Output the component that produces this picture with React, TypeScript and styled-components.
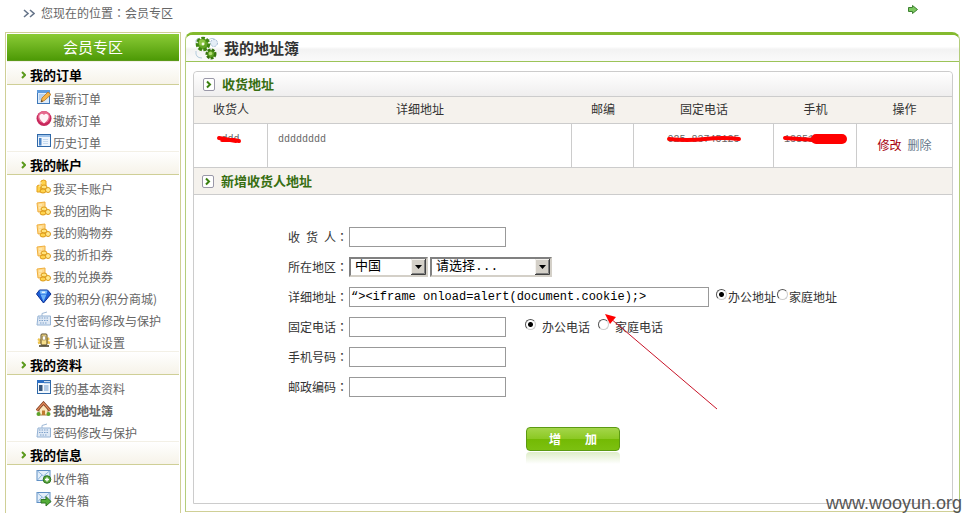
import React from "react";
import styled, { createGlobalStyle } from "styled-components";

const GlobalStyle = createGlobalStyle`
  *, *::before, *::after { box-sizing: border-box; }
  body {
    margin: 0;
    background: #fff;
    color: #333;
    font-family: "Noto Sans CJK SC", sans-serif;
    font-size: 12px;
    line-height: 16px;
  }
  a { color: inherit; text-decoration: none; }
  ul { list-style: none; margin: 0; padding: 0; }
`;

const Page = styled.div`
  position: relative;
  display: flex;
  flex-direction: column;
  min-height: 100vh;
`;

const TopBar = styled.nav`
  display: flex;
  align-items: flex-start;
  gap: 6px;
  height: 32px;
  padding: 5px 44px 0 23px;
  color: #666;

  svg:last-child { margin-left: auto; }
  svg:first-child { margin-top: 4px; }
`;

const Colon = styled.span`
  font-family: "Noto Sans CJK TC", sans-serif;
`;

const Columns = styled.div`
  flex: 1;
  display: flex;
  gap: 4px;
  padding: 0 2px 0 5px;
`;

const Sidebar = styled.aside`
  flex: none;
  width: 176px;
  padding: 1px;
  border: 1px solid #cfcf96;
  border-bottom: 0;
`;

const SidebarTitle = styled.h2`
  margin: 0;
  height: 27px;
  border-bottom: 1px solid #5b9a1a;
  background: linear-gradient(#8bcb36, #4d9a06);
  color: #fff;
  font-size: 15px;
  font-weight: 400;
  line-height: 25px;
  text-align: center;
`;

const GroupTitle = styled.h3`
  display: flex;
  align-items: center;
  gap: 4px;
  height: 24px;
  margin: 0;
  padding: 4px 0 0 14px;
  border-top: 1px solid #f3f0e6;
  border-bottom: 1px solid #cfcf96;
  background: linear-gradient(#fff, #f6f3e9);
  color: #000;
  font-size: 13px;
  font-weight: 700;
`;

const MenuLink = styled.a<{ $current?: boolean }>`
  display: flex;
  align-items: center;
  gap: 1px;
  height: 22px;
  padding: 6px 0 0 29px;
  color: #666;
  font-weight: ${(p) => (p.$current ? 700 : 400)};

  svg { margin-bottom: 5px; }
`;

const Main = styled.main`
  flex: 1;
  min-width: 0;
  display: flex;
  flex-direction: column;
  margin-bottom: 1px;
  border: 1px solid #b4cd7c;
  border-top: 3px solid #84ba2f;
  border-bottom-color: #cfcf96;
  border-radius: 8px 8px 0 0;
`;

const PageTitle = styled.h1`
  display: flex;
  align-items: center;
  gap: 4px;
  height: 27px;
  margin: 0 0 9px;
  padding-left: 9px;
  border-bottom: 1px solid #9cc458;
  background: linear-gradient(#fff 45%, #f3f3f3 55%, #fafafa);
  font-size: 15px;
  font-weight: 700;
  border-radius: 6px 6px 0 0;
`;

const Panel = styled.section`
  flex: 1;
  margin: 0 6px 7px 7px;
  border: 1px solid #ccc;
  border-radius: 4px 4px 0 0;
`;

const PanelTitle = styled.h2<{ $flat?: boolean }>`
  display: flex;
  align-items: center;
  gap: 7px;
  height: ${(p) => (p.$flat ? 27 : 25)}px;
  margin: 0;
  padding-left: ${(p) => (p.$flat ? 8 : 9)}px;
  border-bottom: 1px solid #ccc;
  background: ${(p) => (p.$flat ? "#f5f2ed" : "linear-gradient(#fff, #efeeee)")};
  color: #376e12;
  font-size: 13px;
  font-weight: 700;
  border-radius: ${(p) => (p.$flat ? 0 : "4px 4px 0 0")};
`;

const AddressTable = styled.table`
  width: 100%;
  table-layout: fixed;
  border-collapse: separate;
  border-spacing: 0;
`;

const Col = styled.col<{ $w?: number }>`
  width: ${(p) => (p.$w ? `${p.$w}px` : "auto")};
`;

const HeadCell = styled.th`
  height: 27px;
  padding: 0 0 2px;
  border-bottom: 1px solid #ccc;
  background: #f5f2ed;
  font-weight: 400;
`;

const Cell = styled.td<{ $center?: boolean; $middle?: boolean }>`
  height: 44px;
  padding: ${(p) => (p.$middle ? "0 0 2px" : p.$center ? "8px 0 0" : "8px 0 0 10px")};
  border-bottom: 1px solid #ccc;
  color: #666;
  font-family: "Liberation Mono", "Noto Sans CJK SC", monospace;
  font-size: ${(p) => (p.$middle ? 12 : 10)}px;
  vertical-align: ${(p) => (p.$middle ? "middle" : "top")};
  text-align: ${(p) => (p.$center ? "center" : "left")};

  &:not(:last-child) { border-right: 1px solid #ccc; }
`;

const Masked = styled.span`
  position: relative;
  display: inline-block;

  svg { position: absolute; left: -4px; top: 0; overflow: visible; }
`;

const Actions = styled.div`
  display: flex;
  justify-content: center;
  gap: 6px;
  font-family: "Noto Sans CJK SC", sans-serif;
`;

const EditLink = styled.a`
  color: #a8000c;
`;

const DeleteLink = styled.a`
  color: #66788a;
`;

const Form = styled.form`
  position: relative;
  display: flex;
  flex-direction: column;
  gap: 10px;
  padding: 32px 0 0 94px;
`;

const Row = styled.div`
  display: flex;
  align-items: center;
  height: 20px;
`;

const Label = styled.label`
  flex: none;
  width: 61px;
  white-space: nowrap;
`;

const TextBox = styled.input<{ $wide?: boolean }>`
  width: ${(p) => (p.$wide ? 360 : 157)}px;
  height: 20px;
  padding: 0 1px;
  border: 1px solid #999;
  background: #fff;
  color: #000;
  font-family: "Liberation Mono", monospace;
  font-size: 12px;
  outline: none;
`;

const SelectBox = styled.span<{ $w: number }>`
  position: relative;
  width: ${(p) => p.$w}px;
  height: 20px;
  margin-right: 2px;

  svg { position: absolute; right: 2px; top: 2px; pointer-events: none; }
`;

const Select = styled.select`
  appearance: none;
  width: 100%;
  height: 20px;
  padding: 0 18px 0 4px;
  border: 2px solid;
  border-color: #808080 #d4d0c8 #d4d0c8 #808080;
  border-radius: 0;
  background: #fff;
  color: #000;
  font-family: "Liberation Mono", "Noto Sans CJK SC", monospace;
  font-size: 13px;
  line-height: 16px;
  outline: none;
`;

const Options = styled.div<{ $loose?: boolean }>`
  display: flex;
  align-items: center;
  gap: ${(p) => (p.$loose ? 8 : 1)}px;
  margin-left: ${(p) => (p.$loose ? 19 : 7)}px;
`;

const Choice = styled.label<{ $loose?: boolean }>`
  display: flex;
  align-items: center;
  gap: ${(p) => (p.$loose ? 6 : 1)}px;
  white-space: nowrap;
`;

const Radio = styled.input`
  appearance: none;
  flex: none;
  width: 11px;
  height: 11px;
  margin: 0 0 6px;
  border: 1px solid;
  border-color: #555 #ccc #ccc #555;
  border-radius: 50%;
  background: #fff;

  &:checked { background: radial-gradient(circle, #000 2px, #fff 3px); }
`;

const SubmitArea = styled.div`
  display: flex;
  flex-direction: column;
  gap: 1px;
  width: 94px;
  margin: 20px 0 0 238px;
`;

const Submit = styled.button`
  height: 24px;
  padding: 0;
  border: 1px solid #5c9a12;
  border-radius: 4px;
  background: linear-gradient(#a4d64a, #8cc924 48%, #74ba04 52%, #7cc010);
  color: #fff;
  font-family: "Noto Sans CJK SC", sans-serif;
  font-size: 12px;
  font-weight: 700;
  line-height: 20px;
  white-space: pre;
`;

const Reflection = styled.div`
  height: 12px;
  border-radius: 4px 4px 0 0;
  background: linear-gradient(#deedc8, #fff);
`;

const Pointer = styled.svg`
  position: absolute;
  left: 411px;
  top: 119px;
  pointer-events: none;
`;

const Watermark = styled.div`
  position: absolute;
  right: 0;
  bottom: 0;
  color: #555;
  font-family: "Liberation Sans", sans-serif;
  font-size: 18px;
  line-height: 20px;
`;

const Coins = ({ papers }: { papers?: boolean }) => (
  <>
    {papers ? (
      <path d="M1 2l8-1v9l-7 1z" fill="#ffd98a" stroke="#f0ae3c" />
    ) : (
      <path d="M5 2q3-2 5 0v10H5zM1 7q2-2 4 0v6H1z" fill="#ffd34d" stroke="#e3a01c" />
    )}
    <path d="M3 4h3M3 7h3" stroke="#fff3c4" />
    <ellipse cx="8" cy="8" rx="3" ry="2" fill="#ffe27a" stroke="#dd9a18" />
    <ellipse cx="7" cy="12" rx="3" ry="2" fill="#ffd34d" stroke="#dd9a18" />
    <ellipse cx="12" cy="11" rx="2.5" ry="2.5" fill="#ffe98f" stroke="#dd9a18" />
  </>
);

const Envelope = () => (
  <>
    <rect x="1" y="1.5" width="13" height="10" fill="#e4effa" stroke="#5f8fc4" />
    <path d="M1.5 2l6 5 6-5M1.5 11l4.500-5M13.500 11L9 6" fill="none" stroke="#8db4dc" />
  </>
);

const icons: Record<string, React.ReactNode> = {
  note: (
    <>
      <rect x="1.5" y="1.5" width="12" height="13" fill="#dcebfb" stroke="#3f78b8" />
      <rect x="1" y="1" width="13" height="3" fill="#5e9bdd" />
      <path d="M3 6h6M3 8h4M3 10h3" stroke="#8fb4de" />
      <path d="M5 13l1-4 6-6 3 2.500-6.500 6z" fill="#f5b54a" stroke="#b87420" strokeWidth=".8" />
      <path d="M5 13l.6-2 1.400 1.200z" fill="#333" />
    </>
  ),
  heart: (
    <>
      <circle cx="8" cy="7.500" r="7.500" fill="#c8285c" />
      <circle cx="8" cy="6" r="6" fill="#e6698d" />
      <path d="M8 12.500Q2.500 8 3.500 4.500 5.500 1.500 8 4q2.500-2.500 4.500.5Q13.500 8 8 12.500z" fill="#fff3f6" />
    </>
  ),
  book: (
    <>
      <rect x="1.500" y="1.500" width="13" height="12" fill="#eef5fd" stroke="#2f68a8" />
      <rect x="2" y="2" width="12" height="2" fill="#9fc3ea" />
      <rect x="3" y="5" width="2.500" height="7.500" fill="#4c86c8" />
      <path d="M7 6.500h5M7 8.500h5M7 10.500h5" stroke="#c5daf0" />
    </>
  ),
  coins: <Coins />,
  vouchers: <Coins papers />,
  gem: (
    <>
      <path d="M3.500 1h8L15 5l-7.500 9L.5 5z" fill="#1c5fd6" stroke="#0b2f94" />
      <path d="M3.500 1.500h8L10.500 5h-6zM4.500 5.500h6l-3 7z" fill="#6fb4f8" />
      <path d="M5.500 2.500h4L9 4H6z" fill="#e4f3ff" />
    </>
  ),
  keyboard: (
    <>
      <path d="M6 5V2.500l5-1.500" fill="none" stroke="#9fb9d6" />
      <path d="M2 5h12.500v9H1z" fill="#dfe9f5" stroke="#94b2d4" />
      <path d="M3 7h10M3 9.500h10M4 12h7" stroke="#7fa2cb" strokeDasharray="1.500 1" />
    </>
  ),
  phone: (
    <>
      <path d="M2 6l3 2M2 10l3-1M13 5l-2 2M14 10l-3-1" stroke="#eec450" strokeWidth="2.500" />
      <rect x="5" y="1" width="6" height="11" rx="1" fill="#f8df8c" stroke="#594a28" />
      <rect x="6.500" y="3" width="3" height="4" fill="#fff" stroke="#8a7a48" strokeWidth=".6" />
      <path d="M3 13h10" stroke="#403820" strokeWidth="1.500" />
    </>
  ),
  card: (
    <>
      <rect x="1.500" y="1.500" width="13" height="13" fill="#f3f8fd" stroke="#2f68a8" />
      <rect x="1" y="1" width="7" height="3" fill="#2c6fc4" />
      <path d="M8 3.500h6" stroke="#4c86c8" strokeWidth="1.500" />
      <rect x="3" y="6" width="3.500" height="6" fill="#36567c" />
      <path d="M8 7h4.500M8 9h4.500M8 11h4.500" stroke="#6a98cc" />
    </>
  ),
  home: (
    <>
      <path d="M3 8l4.500-5.500L12 8v6H3z" fill="#fbe7bc" stroke="#a88248" />
      <path d="M.8 9.500L7.500 2l6.700 7.500" fill="none" stroke="#7c3a1c" strokeWidth="2.800" />
      <path d="M.8 9.500L7.500 2l6.700 7.500" fill="none" stroke="#e08a5c" strokeWidth="1.200" />
      <path d="M6 14V9.500h3V14z" fill="#c07a30" />
      <circle cx="2.500" cy="13" r="2" fill="#5da32c" />
      <circle cx="12.500" cy="13" r="2" fill="#5da32c" />
    </>
  ),
  inbox: (
    <>
      <Envelope />
      <circle cx="11" cy="10.500" r="3.800" fill="#58a63c" stroke="#2f7420" />
      <path d="M11 8.500v4M9 10.500h4" stroke="#fff" strokeWidth="1.400" />
    </>
  ),
  outbox: (
    <>
      <Envelope />
      <path d="M5 8.500h5V5.500l5 5-5 4.500v-3H5z" fill="#54ad38" stroke="#2f7420" />
    </>
  ),
};

const MenuIcon = ({ name }: { name: string }) => (
  <svg width="16" height="16" viewBox="0 0 16 16" aria-hidden="true">
    {icons[name]}
  </svg>
);

const Chevron = () => (
  <svg width="5" height="8" viewBox="0 0 5 8" aria-hidden="true">
    <path d="M1 1l3 3-3 3" fill="none" stroke="#5a9a1c" strokeWidth="2" />
  </svg>
);

const BoxedChevron = () => (
  <svg width="12" height="13" viewBox="0 0 12 13" aria-hidden="true">
    <rect x=".5" y=".5" width="11" height="12" rx="1.500" fill="#fff" stroke="#9a98a8" />
    <path d="M4 3.500l3 3-3 3" fill="none" stroke="#3b8010" strokeWidth="2" />
  </svg>
);

const DropButton = () => (
  <svg width="15" height="16" viewBox="0 0 15 16" aria-hidden="true">
    <rect width="15" height="16" fill="#d4d0c8" />
    <path d="M.5 15.500V.5h14" fill="none" stroke="#f4f2ee" />
    <path d="M0 15.500h14.500V0" fill="none" stroke="#404040" />
    <path d="M1 14.500h12.500V1" fill="none" stroke="#808080" />
    <path d="M4 6h7l-3.500 4z" fill="#000" />
  </svg>
);

const Gears = () => (
  <svg width="25" height="24" viewBox="0 0 25 24" aria-hidden="true">
    <path d="M1 15q-1 7 6 7M13 4q6-4 9 2M3 2Q0 4 1 7" fill="none" stroke="#b4ccdc" />
    <circle cx="19" cy="7" r="3.500" fill="#e4edf6" stroke="#a4b9d2" strokeDasharray="2 1" />
    <circle cx="8" cy="8" r="5.500" fill="#62a524" />
    <circle cx="8" cy="8" r="5.800" fill="none" stroke="#3f8412" strokeWidth="3" strokeDasharray="3.500 1.500" />
    <circle cx="7" cy="6.500" r="3.200" fill="#8cc544" />
    <circle cx="8" cy="8" r="1.400" fill="#f4fbe8" />
    <circle cx="16" cy="18" r="4" fill="#62a524" />
    <circle cx="16" cy="18" r="4.200" fill="none" stroke="#37740e" strokeWidth="2.600" strokeDasharray="2.800 1.200" />
    <circle cx="15.500" cy="17.500" r="1.800" fill="#b4dc78" />
  </svg>
);

const menu = [
  {
    title: "我的订单",
    items: [
      ["note", "最新订单"],
      ["heart", "撒娇订单"],
      ["book", "历史订单"],
    ],
  },
  {
    title: "我的帐户",
    items: [
      ["coins", "我买卡账户"],
      ["vouchers", "我的团购卡"],
      ["vouchers", "我的购物券"],
      ["vouchers", "我的折扣券"],
      ["vouchers", "我的兑换券"],
      ["gem", "我的积分(积分商城)"],
      ["keyboard", "支付密码修改与保护"],
      ["phone", "手机认证设置"],
    ],
  },
  {
    title: "我的资料",
    items: [
      ["card", "我的基本资料"],
      ["home", "我的地址簿"],
      ["keyboard", "密码修改与保护"],
    ],
  },
  {
    title: "我的信息",
    items: [
      ["inbox", "收件箱"],
      ["outbox", "发件箱"],
    ],
  },
];

const FieldLabel = ({ id, text }: { id: string; text: string }) => (
  <Label htmlFor={id}>
    {text}
    <Colon>：</Colon>
  </Label>
);

export default function App() {
  return (
    <Page>
      <GlobalStyle />
      <TopBar>
        <svg width="12" height="9" viewBox="0 0 12 9" aria-hidden="true">
          <path d="M1 1l4 3.500L1 8M7 1l4 3.500L7 8" fill="none" stroke="#66758a" strokeWidth="1.600" />
        </svg>
        <span>
          您现在的位置<Colon>：</Colon>会员专区
        </span>
        <svg width="10" height="9" viewBox="0 0 10 9" aria-hidden="true">
          <path d="M.5 2.500h4v-2l5 4-5 4v-2h-4z" fill="#7cc860" stroke="#3d8030" />
        </svg>
      </TopBar>

      <Columns>
        <Sidebar>
          <SidebarTitle>会员专区</SidebarTitle>
          {menu.map((group) => (
            <section key={group.title}>
              <GroupTitle>
                <Chevron />
                {group.title}
              </GroupTitle>
              <ul>
                {group.items.map(([icon, text]) => (
                  <li key={text}>
                    <MenuLink href="#" $current={text === "我的地址簿"}>
                      <MenuIcon name={icon} />
                      {text}
                    </MenuLink>
                  </li>
                ))}
              </ul>
            </section>
          ))}
        </Sidebar>

        <Main>
          <PageTitle>
            <Gears />
            我的地址簿
          </PageTitle>
          <Panel>
            <PanelTitle>
              <BoxedChevron />
              收货地址
            </PanelTitle>
            <AddressTable>
              <colgroup>
                <Col $w={74} />
                <Col />
                <Col $w={62} />
                <Col $w={140} />
                <Col $w={83} />
                <Col $w={95} />
              </colgroup>
              <thead>
                <tr>
                  {["收货人", "详细地址", "邮编", "固定电话", "手机", "操作"].map((h) => (
                    <HeadCell key={h} scope="col">
                      {h}
                    </HeadCell>
                  ))}
                </tr>
              </thead>
              <tbody>
                <tr>
                  <Cell $center>
                    <Masked>
                      ddd
                      <svg width="24" height="16" aria-hidden="true">
                        <path d="M2 6l17 3M5 8h12l5 1" fill="none" stroke="#f00" strokeWidth="4" strokeLinecap="round" />
                      </svg>
                    </Masked>
                  </Cell>
                  <Cell>dddddddd</Cell>
                  <Cell />
                  <Cell $center>
                    <Masked>
                      025-83745125
                      <svg width="80" height="16" aria-hidden="true">
                        <path d="M6 7q18 2 36 0t34 0" fill="none" stroke="#f00" strokeWidth="4" strokeLinecap="round" />
                      </svg>
                    </Masked>
                  </Cell>
                  <Cell>
                    <Masked>
                      13851
                      <svg width="70" height="16" aria-hidden="true">
                        <path d="M5 6l14 1 18 1" fill="none" stroke="#f00" strokeWidth="4" strokeLinecap="round" />
                        <path d="M36 7h26" fill="none" stroke="#f00" strokeWidth="10" strokeLinecap="round" />
                      </svg>
                    </Masked>
                  </Cell>
                  <Cell $middle>
                    <Actions>
                      <EditLink href="#">修改</EditLink>
                      <DeleteLink href="#">删除</DeleteLink>
                    </Actions>
                  </Cell>
                </tr>
              </tbody>
            </AddressTable>
            <PanelTitle $flat>
              <BoxedChevron />
              新增收货人地址
            </PanelTitle>

            <Form onSubmit={(e) => e.preventDefault()}>
              <Row>
                <FieldLabel id="name" text={"收\u2002货\u2002人"} />
                <TextBox id="name" />
              </Row>
              <Row>
                <FieldLabel id="country" text="所在地区" />
                <SelectBox $w={79}>
                  <Select id="country">
                    <option>中国</option>
                  </Select>
                  <DropButton />
                </SelectBox>
                <SelectBox $w={122}>
                  <Select aria-label="省份">
                    <option>请选择...</option>
                  </Select>
                  <DropButton />
                </SelectBox>
              </Row>
              <Row>
                <FieldLabel id="address" text="详细地址" />
                <TextBox id="address" $wide defaultValue={"“><iframe onload=alert(document.cookie);>"} />
                <Options>
                  <Choice>
                    <Radio type="radio" name="addressType" defaultChecked />
                    办公地址
                  </Choice>
                  <Choice>
                    <Radio type="radio" name="addressType" />
                    家庭地址
                  </Choice>
                </Options>
              </Row>
              <Row>
                <FieldLabel id="phone" text="固定电话" />
                <TextBox id="phone" />
                <Options $loose>
                  <Choice $loose>
                    <Radio type="radio" name="phoneType" defaultChecked />
                    办公电话
                  </Choice>
                  <Choice $loose>
                    <Radio type="radio" name="phoneType" />
                    家庭电话
                  </Choice>
                </Options>
              </Row>
              <Row>
                <FieldLabel id="mobile" text="手机号码" />
                <TextBox id="mobile" />
              </Row>
              <Row>
                <FieldLabel id="postcode" text="邮政编码" />
                <TextBox id="postcode" />
              </Row>
              <SubmitArea>
                <Submit type="submit">{"增\u3000\u3000加"}</Submit>
                <Reflection />
              </SubmitArea>
              <Pointer width="114" height="97" viewBox="0 0 114 97" aria-hidden="true">
                <path d="M5 4l107 91" stroke="#c81428" strokeWidth="1" />
                <path d="M0 0l11 3-6 7z" fill="#f00" />
              </Pointer>
            </Form>
          </Panel>
        </Main>
      </Columns>
      <Watermark>www.wooyun.org</Watermark>
    </Page>
  );
}
